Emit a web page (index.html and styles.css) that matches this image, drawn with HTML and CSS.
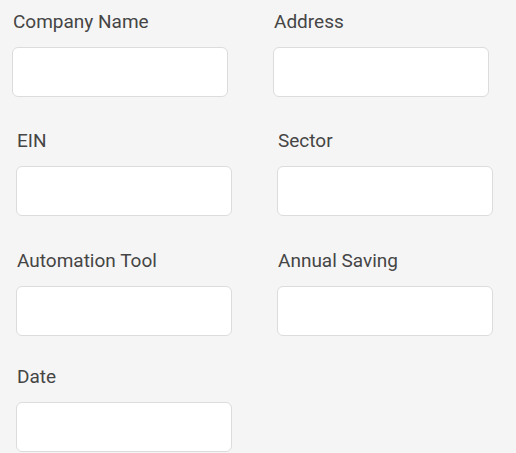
FILE: index.html
```html
<!DOCTYPE html>
<html>
<head>
<meta charset="utf-8">
<link rel="stylesheet" href="styles.css">
</head>
<body>
<form class="form">
  <div class="row row-first">
    <div class="field"><label class="label">Company Name</label><input class="input" type="text"></div>
    <div class="field"><label class="label">Address</label><input class="input" type="text"></div>
  </div>
  <div class="row row-second">
    <div class="field"><label class="label">EIN</label><input class="input" type="text"></div>
    <div class="field"><label class="label">Sector</label><input class="input" type="text"></div>
  </div>
  <div class="row row-third">
    <div class="field"><label class="label">Automation Tool</label><input class="input" type="text"></div>
    <div class="field"><label class="label">Annual Saving</label><input class="input" type="text"></div>
  </div>
  <div class="row row-fourth">
    <div class="field"><label class="label">Date</label><input class="input" type="text"></div>
  </div>
</form>
</body>
</html>
```
FILE: styles.css
```css
html, body {
  margin: 0;
  padding: 0;
  background: #f5f5f5;
  overflow: hidden;
}
.form {
  display: flex;
  flex-direction: column;
  padding-top: 11px;
}
.row {
  display: grid;
  grid-template-columns: 216px 216px;
  column-gap: 45px;
  padding-left: 16px;
}
.row-first { padding-left: 12px; }
.row-second { margin-top: 33px; }
.row-third { margin-top: 34px; }
.row-fourth { margin-top: 30px; }
.field {
  display: flex;
  flex-direction: column;
}
.label {
  font-family: Roboto, "Liberation Sans", sans-serif;
  font-size: 19px;
  line-height: 22px;
  color: #454545;
  margin-left: 1px;
  margin-bottom: 14px;
}
.input {
  box-sizing: border-box;
  height: 50px;
  width: 216px;
  margin: 0;
  background: #fff;
  border: 1px solid #dcdcdc;
  border-radius: 6px;
  outline: none;
}
```
